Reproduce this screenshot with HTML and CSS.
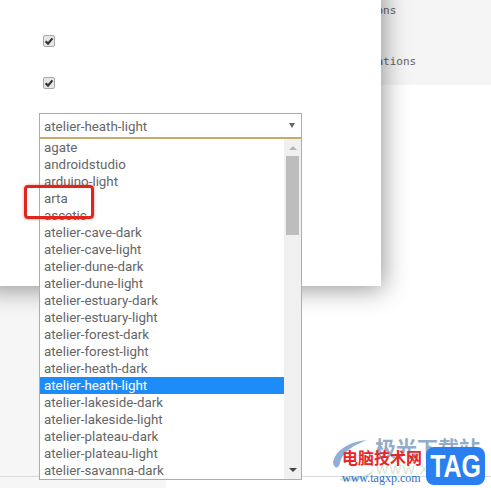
FILE: index.html
```html
<!DOCTYPE html>
<html lang="en">
<head>
  <meta charset="UTF-8">
  <title>Settings</title>
  <meta name="viewport" content="width=device-width, initial-scale=1.0"/>
  <link rel="stylesheet" href="styles.css">
</head>
<body>
  <div class="page">
    <aside class="sidebar"></aside>

    <main class="content">
      <div class="code-panel">
        <div>options</div>
        <div>animations</div>
      </div>
    </main>

    <div class="footer-line"></div>

    <!-- Settings dialog -->
    <div class="modal">
      <div class="check-row">
        <span class="check"><svg viewBox="0 0 12 12" width="12" height="12"><path d="M2.6 6.2 5 8.6 9.4 3.4" fill="none" stroke="#333" stroke-width="2.2"/></svg></span>
      </div>
      <div class="check-row">
        <span class="check"><svg viewBox="0 0 12 12" width="12" height="12"><path d="M2.6 6.2 5 8.6 9.4 3.4" fill="none" stroke="#333" stroke-width="2.2"/></svg></span>
      </div>

      <div class="select">
        <span>atelier-heath-light</span>
        <span class="select-arrow"></span>

        <div class="dropdown">
          <ul class="options">
            <li>agate</li>
            <li>androidstudio</li>
            <li>arduino-light</li>
            <li>arta</li>
            <li>ascetic</li>
            <li>atelier-cave-dark</li>
            <li>atelier-cave-light</li>
            <li>atelier-dune-dark</li>
            <li>atelier-dune-light</li>
            <li>atelier-estuary-dark</li>
            <li>atelier-estuary-light</li>
            <li>atelier-forest-dark</li>
            <li>atelier-forest-light</li>
            <li>atelier-heath-dark</li>
            <li class="selected">atelier-heath-light</li>
            <li>atelier-lakeside-dark</li>
            <li>atelier-lakeside-light</li>
            <li>atelier-plateau-dark</li>
            <li>atelier-plateau-light</li>
            <li>atelier-savanna-dark</li>
          </ul>
          <div class="scrollbar">
            <span class="arrow-up"></span>
            <span class="thumb"></span>
            <span class="arrow-down"></span>
          </div>
        </div>
      </div>
    </div>

    <!-- Red annotation -->
    <div class="callout"></div>

    <!-- Watermark -->
    <div class="watermark">
      <svg class="wm-swoosh" viewBox="0 0 60 48" width="60" height="48">
        <path d="M2 26C4 13 18 5 36 3 23 8 11 15 9 26 8 31 4 33 2 26Z" fill="#8fb0d6"/>
        <path d="M12 40C24 42 36 39 44 32 38 42 24 46 8 43Z" fill="#d3e6cc"/>
      </svg>
      <span class="wm-site">极光下载站</span>
      <span class="wm-url-faint">WWW.XZ</span>
      <span class="wm-red">电脑技术网</span>
      <span class="wm-url">www.tagxp.com</span>
      <div class="wm-tag"><span>TAG</span></div>
    </div>
  </div>
</body>
</html>
```

FILE: styles.css
```css
* {
  box-sizing: border-box;
}

html, body {
  margin: 0;
  height: 100%;
  overflow: hidden;
}

body {
  font-family: Roboto, Arial, sans-serif;
  font-size: 13.33px;
  color: #666;
  background: #fff;
}

.page {
  position: relative;
  display: grid;
  grid-template-columns: 166px 1fr;
  height: 488px;
  overflow: hidden;
}

.sidebar {
  background: #f6f6f6;
}

.code-panel {
  height: 85px;
  padding: 4px 0 0 350px;
  margin-left: -166px;
  background: #f5f5f5;
  font-family: "DejaVu Sans Mono", monospace;
  font-size: 11px;
  line-height: 14px;
  color: #5f5f5f;
}

.code-panel div {
  margin-bottom: 37px;
}

.footer-line {
  position: absolute;
  left: 0;
  right: 0;
  top: 476px;
  height: 1px;
  background: #d9d9d9;
}

/* Dialog */
.modal {
  position: absolute;
  left: -20px;
  top: -20px;
  width: 401px;
  height: 306px;
  padding: 55px 0 0 59px;
  background: #fff;
  box-shadow: 2px 3px 24px rgba(0, 0, 0, 0.42);
}

.check-row {
  height: 42px;
  padding-left: 4px;
}

.check {
  display: block;
  width: 12px;
  height: 12px;
  background: #e6e6e6;
  border: 1px solid #a8a8a8;
  border-radius: 2px;
}

.check svg {
  display: block;
  margin: -1px;
}

.select {
  position: relative;
  display: flex;
  align-items: center;
  justify-content: space-between;
  width: 263px;
  height: 25px;
  margin-top: -6px;
  padding: 2px 6px 0 4px;
  border: 1px solid #ababab;
  background: #fff;
}

.select-arrow {
  width: 0;
  height: 0;
  margin: -3px 0 0;
  border-left: 3px solid transparent;
  border-right: 3px solid transparent;
  border-top: 5px solid #666;
}

.dropdown {
  position: absolute;
  left: -1px;
  top: 24px;
  display: flex;
  width: 263px;
  height: 342px;
  background: #fff;
  border: 1px solid #c9ab6c;
}

.options {
  flex: 1;
  margin: 0;
  padding: 0;
  list-style: none;
}

.options li {
  height: 17px;
  padding-left: 4px;
  line-height: 17px;
  white-space: nowrap;
}

.options li.selected {
  background: #1e8cf8;
  color: #fff;
}

.scrollbar {
  display: flex;
  flex-direction: column;
  align-items: center;
  width: 17px;
  background: #f0f0f0;
}

.arrow-up {
  width: 0;
  height: 0;
  margin: 7px 0 6px;
  border-left: 4px solid transparent;
  border-right: 4px solid transparent;
  border-bottom: 4px solid #b4b4b4;
}

.thumb {
  width: 13px;
  height: 79px;
  background: #bdbdbd;
}

.arrow-down {
  width: 0;
  height: 0;
  margin-top: auto;
  margin-bottom: 7px;
  border-left: 4px solid transparent;
  border-right: 4px solid transparent;
  border-top: 4px solid #444;
}

/* Annotation */
.callout {
  position: absolute;
  left: 24px;
  top: 185px;
  width: 70px;
  height: 34px;
  border: 3px solid #e0261c;
  border-radius: 4px;
  box-shadow: 0 0 3px rgba(224, 38, 28, 0.5);
}

/* Watermark */
.watermark {
  position: absolute;
  left: 330px;
  top: 436px;
  width: 161px;
  height: 52px;
}

.watermark > * {
  position: absolute;
}

.wm-swoosh {
  left: 1px;
  top: 1px;
}

.wm-site {
  left: 45px;
  top: -1px;
  font-family: "Noto Sans CJK SC", sans-serif;
  font-size: 21px;
  font-weight: 700;
  line-height: 24px;
  color: #93acca;
  white-space: nowrap;
}

.wm-url-faint {
  left: 46px;
  top: 27px;
  font-family: "Liberation Sans", sans-serif;
  font-size: 13px;
  line-height: 14px;
  letter-spacing: 1px;
  color: #d5e6d2;
}

.wm-red {
  left: 12px;
  top: 10px;
  font-family: "Noto Sans CJK SC", sans-serif;
  font-size: 16px;
  font-weight: 700;
  line-height: 22px;
  color: #e8262a;
  white-space: nowrap;
}

.wm-url {
  left: 12px;
  top: 35px;
  font-family: "Liberation Serif", serif;
  font-size: 12px;
  line-height: 14px;
  color: #2b6fd0;
  white-space: nowrap;
}

.wm-tag {
  left: 96px;
  top: 11px;
  display: flex;
  align-items: center;
  justify-content: center;
  width: 59px;
  height: 38px;
  background: #2a7ff0;
  border-radius: 8px;
}

.wm-tag span {
  font-family: "Liberation Sans", sans-serif;
  font-size: 32px;
  font-weight: 700;
  line-height: 38px;
  color: #fff;
  transform: scaleX(0.78);
}
```
